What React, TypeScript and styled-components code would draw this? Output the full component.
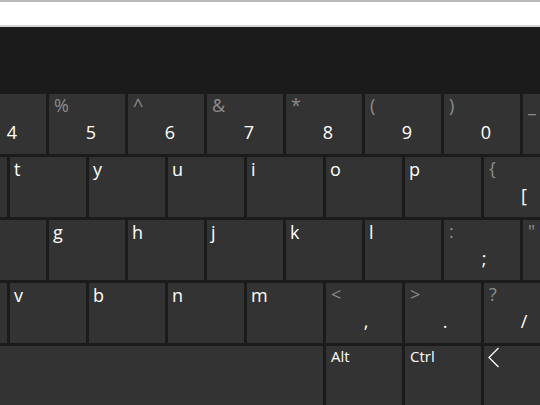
import React from 'react';
import styled, { createGlobalStyle } from 'styled-components';

const GlobalStyle = createGlobalStyle`
  html, body {
    margin: 0;
    padding: 0;
    background: #1b1b1b;
  }
  body {
    font-family: "Open Sans", "Noto Sans", sans-serif;
  }
`;

// keys partly outside the window keep only the labels that show
type KeyDef = { main?: string; shift?: string };

const rows: { offset: number; keys: KeyDef[] }[] = [
  {
    offset: -30,
    keys: [
      { main: '4' },
      { shift: '%', main: '5' },
      { shift: '^', main: '6' },
      { shift: '&', main: '7' },
      { shift: '*', main: '8' },
      { shift: '(', main: '9' },
      { shift: ')', main: '0' },
      { shift: '_' },
    ],
  },
  {
    offset: -69,
    keys: [
      {},
      { main: 't' },
      { main: 'y' },
      { main: 'u' },
      { main: 'i' },
      { main: 'o' },
      { main: 'p' },
      { shift: '{', main: '[' },
    ],
  },
  {
    offset: -30,
    keys: [
      {},
      { main: 'g' },
      { main: 'h' },
      { main: 'j' },
      { main: 'k' },
      { main: 'l' },
      { shift: ':', main: ';' },
      { shift: '"' },
    ],
  },
  {
    offset: -69,
    keys: [
      {},
      { main: 'v' },
      { main: 'b' },
      { main: 'n' },
      { main: 'm' },
      { shift: '<', main: ',' },
      { shift: '>', main: '.' },
      { shift: '?', main: '/' },
    ],
  },
];

const App: React.FC = () => {
  return (
    <>
      <GlobalStyle />
      <Screen>
        <TopStrip />
        <Candidates />
        <Keyboard>
          {rows.map((row, i) => (
            <Row key={i} $offset={row.offset}>
              {row.keys.map((k, j) => {
                const dual = i === 0 || !!k.shift;
                return (
                  <Key key={j}>
                    {dual ? (
                      <>
                        <ShiftLabel>{k.shift ?? '\u00a0'}</ShiftLabel>
                        {k.main && <MainLabel $digit={i === 0}>{k.main}</MainLabel>}
                      </>
                    ) : (
                      k.main && <Letter>{k.main}</Letter>
                    )}
                  </Key>
                );
              })}
            </Row>
          ))}
          <Row $offset={0}>
            <Key $w={323} />
            <Key>
              <Modifier>Alt</Modifier>
            </Key>
            <Key>
              <Modifier>Ctrl</Modifier>
            </Key>
            <Key>
              <Chevron width="13" height="21" viewBox="0 0 13 21">
                <path d="M11.5 1 L2 10.5 L11.5 20" fill="none" stroke="#ffffff" strokeWidth="1.2" />
              </Chevron>
            </Key>
          </Row>
        </Keyboard>
      </Screen>
    </>
  );
};

const Screen = styled.div`
  width: 540px;
  height: 405px;
  overflow: hidden;
  display: flex;
  flex-direction: column;
  background: #1b1b1b;
`;

const TopStrip = styled.div`
  height: 23px;
  background: #ffffff;
  border-top: 2px solid #b9b9b9;
  border-bottom: 2px solid #d4d4d4;
  flex-shrink: 0;
`;

const Candidates = styled.div`
  height: 67px;
  background: #1b1b1b;
  flex-shrink: 0;
`;

const Keyboard = styled.div`
  display: flex;
  flex-direction: column;
  gap: 3px;
`;

const Row = styled.div<{ $offset: number }>`
  display: flex;
  gap: 3px;
  margin-left: ${(p) => p.$offset}px;
  height: 60px;
  flex-shrink: 0;
`;

const Key = styled.div<{ $w?: number }>`
  width: ${(p) => p.$w ?? 76}px;
  height: 60px;
  flex-shrink: 0;
  background: #333333;
  display: flex;
  flex-direction: column;
  padding: 0 5px;
  box-sizing: border-box;
  color: #ffffff;
`;

const Letter = styled.span`
  font-size: 18px;
  line-height: 24px;
  margin-left: -1px;
`;

const ShiftLabel = styled.span`
  font-size: 18px;
  line-height: 23px;
  color: #8c8c8c;
`;

const MainLabel = styled.span<{ $digit?: boolean }>`
  font-size: 18px;
  line-height: 24px;
  margin-top: 3px;
  align-self: center;
  padding-left: ${(p) => (p.$digit ? 8 : 4)}px;
`;

const Modifier = styled.span`
  font-size: 15px;
  line-height: 20px;
`;

const Chevron = styled.svg`
  margin-top: 1px;
  margin-left: -2px;
`;

export default App;
